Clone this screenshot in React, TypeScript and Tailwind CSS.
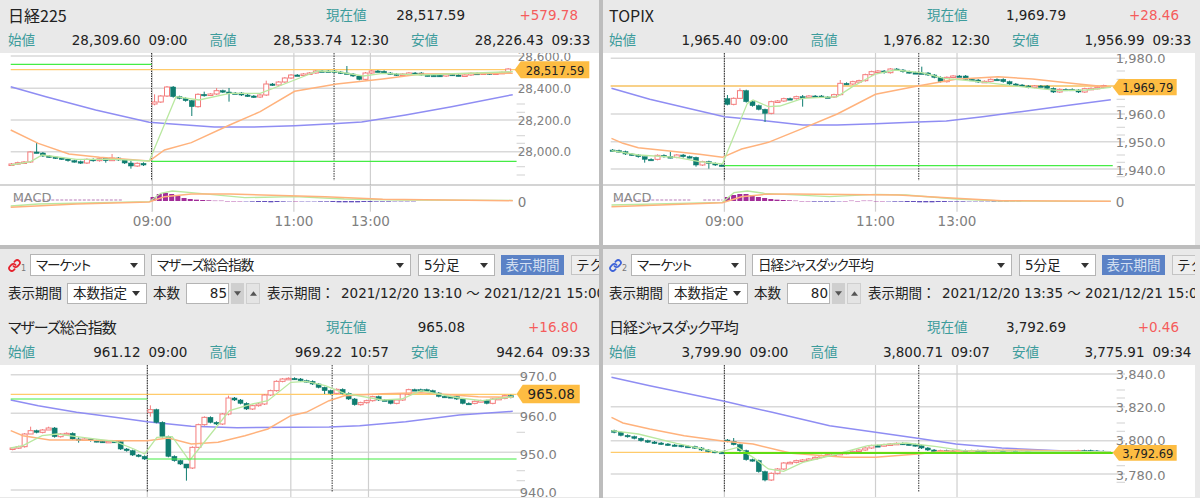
import { Link } from 'lucide-react';

// chart data is in "trace" units: x 1568 = 600px, y 3 = 1px
type Seg = { x0: number; x1: number; open: number; closes: number[]; wicks?: Record<number, [number, number]> };
type ChartData = {
  top: number;
  height: number;
  axisClass: string;
  tagClass: string;
  grid: number[];
  minor: number[];
  labels: [string, number][];
  dashed: number[];
  vert: number[];
  vertEnd: number;
  dashEnd: number;
  gold: number;
  greens: [number, number, number][];
  greenColor: string;
  greenWidth: number;
  blue: number[][];
  orange: number[][];
  lime: number[][];
  segs: Seg[];
  tag: { text: string; x: number; y0: number; y1: number; w: number };
  macd?: { lime: number[][]; orange: number[][]; bars: number[]; faint: number[][]; times: [string, number][]; x0: number; step: number };
};

const TX = 600 / 1568;

const nikkei: ChartData = {
  top: 53,
  height: 192,
  axisClass: 'text-[12px]',
  tagClass: 'text-[11.5px]',
  grid: [168, 265, 360, 455],
  minor: [215, 312, 337, 407, 430, 500, 525],
  labels: [['28,600.0', 172], ['28,400.0', 267], ['28,200.0', 364], ['28,000.0', 457]],
  dashed: [396, 873],
  vert: [398, 768, 968],
  vertEnd: 635,
  dashEnd: 542,
  gold: 209,
  greens: [[28, 396, 193], [396, 1350, 484]],
  greenColor: '#45ec45',
  greenWidth: 1.2,
  blue: [[28, 260], [120, 290], [250, 330], [390, 367], [450, 372], [560, 381], [660, 381], [770, 377], [870, 371], [945, 366], [1060, 345], [1180, 320], [1340, 284]],
  orange: [[28, 390], [100, 430], [180, 462], [260, 472], [390, 483], [430, 450], [500, 428], [600, 375], [680, 335], [770, 274], [880, 252], [1000, 237], [1100, 222], [1340, 220]],
  lime: [[28, 495], [80, 485], [110, 465], [200, 478], [300, 478], [390, 483], [460, 290], [520, 300], [600, 280], [680, 280], [770, 240], [830, 213], [880, 215], [950, 228], [1000, 220], [1100, 225], [1340, 215]],
  segs: [
    { x0: 30, x1: 375, open: 495, closes: [492, 488, 486, 456, 459, 468, 471, 474, 477, 482, 485, 489, 478, 482, 476, 482, 474, 480, 489, 498, 490, 495], wicks: { 4: [428, 460], 15: [478, 488], 16: [462, 482], 19: [482, 506] } },
    { x0: 404, x1: 1328, open: 312, closes: [306, 288, 261, 290, 295, 302, 320, 283, 285, 282, 272, 276, 279, 279, 285, 288, 291, 285, 252, 255, 246, 234, 225, 225, 222, 219, 213, 213, 213, 216, 219, 222, 228, 238, 219, 213, 214, 219, 222, 225, 222, 219, 219, 225, 226, 226, 228, 223, 225, 226, 225, 220, 220, 219, 222, 219, 217, 207], wicks: { 0: [283, 316], 6: [300, 348], 8: [275, 290], 10: [264, 285], 12: [264, 305], 18: [242, 288], 31: [198, 220] } },
  ],
  tag: { text: '28,517.59', x: 1345, y0: 184, y1: 235, w: 195 },
  macd: {
    lime: [[28, 618], [100, 612], [390, 605], [420, 580], [450, 573], [500, 578], [640, 593], [770, 590], [900, 597], [1050, 600], [1340, 601]],
    orange: [[28, 622], [200, 612], [390, 606], [430, 590], [500, 582], [600, 582], [850, 590], [1000, 598], [1340, 602]],
    bars: [12, 21, 24, 21, 15, 9, 6, 4, 3, 2, 1, 1, 0, 0, 0, -1, -2, -3, -3, -4, -3, -2, -1, 0, -1, -1, -1, -2, -2, -3, -4, -4, -4, -4, -3, -3, -2, -2, -2, -1, -1, -1, -1],
    faint: [[40, 600, 320]],
    times: [['09:00', 398], ['11:00', 768], ['13:00', 968]],
    x0: 400,
    step: 16.2,
  },
};

const topix: ChartData = {
  top: 53,
  height: 192,
  axisClass: 'text-[13px]',
  tagClass: 'text-[11.5px]',
  grid: [175, 258, 342, 425, 507],
  minor: [213, 238, 298, 320, 382, 405, 465, 487, 530],
  labels: [['1,980.0', 178], ['1,960.0', 345], ['1,950.0', 428], ['1,940.0', 512]],
  dashed: [325, 833],
  vert: [325, 720, 933],
  vertEnd: 635,
  dashEnd: 542,
  gold: 258,
  greens: [[325, 1340, 497]],
  greenColor: '#45ec45',
  greenWidth: 1.2,
  blue: [[30, 265], [130, 298], [230, 325], [325, 350], [430, 362], [530, 375], [620, 375], [720, 371], [830, 366], [905, 363], [1000, 350], [1100, 335], [1230, 315], [1335, 299]],
  orange: [[30, 415], [60, 430], [100, 443], [200, 455], [260, 463], [320, 472], [370, 447], [440, 427], [530, 385], [620, 342], [720, 283], [830, 258], [930, 238], [1040, 230], [1130, 237], [1250, 252], [1335, 262]],
  lime: [[30, 452], [100, 465], [200, 472], [260, 485], [320, 492], [385, 310], [400, 300], [440, 320], [470, 318], [530, 295], [620, 290], [660, 260], [720, 222], [770, 210], [840, 218], [900, 235], [990, 245], [1100, 260], [1200, 272], [1270, 270], [1335, 262]],
  segs: [
    { x0: 33, x1: 318, open: 450, closes: [452, 455, 462, 465, 470, 478, 478, 466, 470, 472, 465, 470, 472, 495, 485, 490, 495, 496], wicks: { 5: [470, 488], 9: [455, 475], 13: [470, 500], 15: [482, 506] } },
    { x0: 333, x1: 1316, open: 296, closes: [313, 295, 272, 305, 317, 328, 340, 305, 303, 296, 296, 290, 291, 288, 288, 291, 291, 284, 250, 252, 245, 242, 224, 215, 213, 218, 207, 210, 215, 218, 219, 219, 225, 232, 245, 232, 228, 228, 238, 240, 246, 244, 238, 238, 245, 252, 255, 258, 262, 258, 258, 265, 276, 268, 268, 270, 276, 266, 265, 262, 257], wicks: { 0: [285, 316], 2: [265, 296], 6: [326, 366], 12: [285, 320], 18: [240, 286], 31: [200, 222] } },
  ],
  tag: { text: '1,969.79', x: 1340, y0: 237, y1: 286, w: 167 },
  macd: {
    lime: [[30, 615], [320, 607], [350, 578], [385, 573], [430, 580], [600, 590], [720, 583], [800, 585], [930, 597], [1050, 603], [1335, 604]],
    orange: [[30, 620], [320, 608], [370, 590], [430, 583], [500, 582], [780, 585], [930, 595], [1050, 602], [1335, 604]],
    bars: [12, 18, 21, 21, 18, 12, 9, 6, 4, 3, 2, 1, 0, 0, -2, -2, -2, -2, -1, 0, 1, 0, 1, 1, 0, 0, -1, -2, -2, -3, -3, -4, -4, -4, -3, -3, -2, -2, -2, -1, -1, -1, -1, -2, -2, -2, -1, -1],
    faint: [[40, 600, 240], [270, 600, 320]],
    times: [['09:00', 325], ['11:00', 720], ['13:00', 933]],
    x0: 333,
    step: 16.2,
  },
};

const mothers: ChartData = {
  top: 121,
  height: 132,
  axisClass: 'text-[13px]',
  tagClass: 'text-[13.5px]',
  grid: [392, 508, 625, 738],
  minor: [565, 680, 710],
  labels: [['970.0', 400], ['960.0', 518], ['950.0', 633], ['940.0', 748]],
  dashed: [385, 868],
  vert: [385, 760, 963],
  vertEnd: 760,
  dashEnd: 745,
  gold: 451,
  greens: [[28, 385, 465], [385, 1350, 645]],
  greenColor: '#45ec45',
  greenWidth: 1.2,
  blue: [[28, 468], [100, 485], [200, 505], [300, 520], [385, 533], [500, 547], [620, 551], [760, 550], [860, 549], [940, 545], [1060, 533], [1200, 513], [1340, 502]],
  orange: [[28, 560], [60, 575], [130, 588], [200, 588], [300, 590], [385, 590], [440, 582], [500, 600], [570, 595], [640, 575], [700, 555], [760, 515], [800, 505], [860, 470], [900, 455], [1000, 449], [1100, 446], [1250, 458], [1340, 460]],
  lime: [[28, 612], [60, 605], [110, 575], [150, 570], [200, 578], [300, 592], [350, 615], [378, 630], [410, 580], [450, 578], [495, 650], [530, 600], [600, 500], [660, 480], [700, 470], [760, 415], [800, 412], [850, 425], [900, 448], [1000, 468], [1050, 465], [1100, 440], [1200, 462], [1260, 470], [1340, 458]],
  segs: [
    { x0: 33, x1: 378, open: 616, closes: [612, 608, 570, 560, 565, 558, 552, 578, 570, 568, 585, 588, 585, 590, 592, 593, 592, 593, 615, 620, 633, 637, 645], wicks: { 3: [548, 566], 6: [548, 558], 11: [580, 596] } },
    { x0: 393, x1: 1335, open: 505, closes: [497, 535, 578, 637, 650, 660, 672, 610, 542, 520, 535, 540, 510, 462, 468, 478, 495, 485, 480, 453, 440, 412, 405, 403, 405, 410, 412, 420, 430, 440, 448, 436, 448, 465, 482, 476, 470, 458, 468, 468, 478, 468, 450, 437, 437, 437, 440, 447, 457, 458, 458, 465, 478, 478, 472, 470, 478, 465, 463, 455, 460], wicks: { 0: [484, 518], 6: [660, 710], 13: [455, 514], 29: [428, 450] } },
  ],
  tag: { text: '965.08', x: 1350, y0: 422, y1: 478, w: 165 },
};

const jasdaq: ChartData = {
  top: 121,
  height: 132,
  axisClass: 'text-[13px]',
  tagClass: 'text-[11.5px]',
  grid: [390, 488, 590, 690],
  minor: [438, 462, 537, 562, 640, 665, 715],
  labels: [['3,840.0', 392], ['3,820.0', 492], ['3,800.0', 592], ['3,780.0', 695]],
  dashed: [325, 833],
  vert: [325, 720, 933],
  vertEnd: 760,
  dashEnd: 745,
  gold: 625,
  greens: [[325, 1340, 627]],
  greenColor: '#5fdc14',
  greenWidth: 2,
  blue: [[30, 400], [130, 425], [325, 472], [450, 505], [600, 545], [720, 565], [830, 583], [930, 600], [1050, 612], [1200, 620], [1335, 623]],
  orange: [[30, 520], [60, 537], [130, 555], [220, 575], [325, 592], [400, 600], [500, 628], [640, 640], [720, 640], [830, 630], [900, 622], [1100, 618], [1335, 625]],
  lime: [[30, 560], [100, 570], [200, 598], [310, 625], [360, 610], [400, 640], [440, 675], [480, 682], [530, 655], [620, 630], [700, 605], [800, 597], [880, 608], [950, 620], [1335, 624]],
  segs: [
    { x0: 37, x1: 318, open: 560, closes: [565, 574, 578, 583, 590, 594, 597, 600, 603, 604, 607, 608, 612, 618, 622, 625, 627] },
    { x0: 333, x1: 1315, open: 588, closes: [592, 602, 620, 647, 650, 683, 708, 688, 675, 657, 655, 650, 648, 645, 640, 635, 632, 630, 628, 625, 622, 618, 612, 605, 605, 602, 600, 598, 600, 602, 605, 612, 618, 622, 620, 621, 621, 620, 622, 620, 621, 622, 621, 620, 622, 621, 622, 621, 622, 621, 622, 623, 627, 624, 622, 621, 620, 620, 621, 622, 622], wicks: { 6: [680, 712], 1: [582, 604] } },
  ],
  tag: { text: '3,792.69', x: 1340, y0: 603, y1: 650, w: 167 },
};

const poly = (pts: number[][], top: number) => pts.map(([x, y]) => `${x * TX},${y / 3 - top}`).join(' ');

function Candles({ seg, top }: { seg: Seg; top: number }) {
  const step = (seg.x1 - seg.x0) / (seg.closes.length - 1);
  return (
    <>
      {seg.closes.map((close, i) => {
        const open = i === 0 ? seg.open : seg.closes[i - 1];
        const up = close < open;
        const x = (seg.x0 + i * step) * TX;
        const bodyTop = Math.min(open, close);
        const bodyBottom = Math.max(open, close);
        const wick = seg.wicks?.[i] ?? [bodyTop - 3, bodyBottom + 3];
        const color = up ? '#f47c7c' : '#0f7d70';
        return (
          <g key={i}>
            <line x1={x} x2={x} y1={wick[0] / 3 - top} y2={wick[1] / 3 - top} stroke={color} strokeWidth={1} />
            <rect
              x={x - 2.5}
              y={bodyTop / 3 - top}
              width={5}
              height={Math.max((bodyBottom - bodyTop) / 3, 1.5)}
              fill={up ? '#ffffff' : color}
              stroke={color}
              strokeWidth={up ? 1 : 0.5}
            />
          </g>
        );
      })}
    </>
  );
}

function Chart({ data, right }: { data: ChartData; right?: boolean }) {
  const { top, height, tag, macd } = data;
  const width = right ? 592 : 599;
  const mid = (tag.y0 + tag.y1) / 2;
  const tagPts = [
    [tag.x, mid],
    [tag.x + 16, tag.y0],
    [tag.x + tag.w, tag.y0],
    [tag.x + tag.w, tag.y1],
    [tag.x + 16, tag.y1],
  ];
  return (
    <svg width={width} height={height} viewBox={`${right ? 3 : 0} 0 ${width} ${height}`} className="block bg-white">
      {data.grid.map((y) => (
        <line key={y} x1={28 * TX} x2={1372 * TX} y1={y / 3 - top} y2={y / 3 - top} stroke="#d9d9d9" strokeWidth={1.5} />
      ))}
      {data.minor.map((y) => (
        <line key={y} x1={1350 * TX} x2={1372 * TX} y1={y / 3 - top} y2={y / 3 - top} stroke="#d9d9d9" strokeWidth={1.2} />
      ))}
      {data.vert.map((x) => (
        <line key={x} x1={x * TX} x2={x * TX} y1={0} y2={data.vertEnd / 3 - top} stroke="#cfcfcf" strokeWidth={1.2} />
      ))}
      {data.dashed.map((x) => (
        <line key={x} x1={x * TX} x2={x * TX} y1={0} y2={data.dashEnd / 3 - top} stroke="#333333" strokeWidth={1} strokeDasharray="1.5 1" />
      ))}
      <line x1={28 * TX} x2={1350 * TX} y1={data.gold / 3 - top} y2={data.gold / 3 - top} stroke="#ffcb6b" strokeWidth={1.3} />
      <polyline points={poly(data.blue, top)} fill="none" stroke="#8f8df3" strokeWidth={1.5} />
      {data.segs.map((seg, i) => (
        <Candles key={i} seg={seg} top={top} />
      ))}
      <polyline points={poly(data.orange, top)} fill="none" stroke="#ffb27c" strokeWidth={1.5} />
      <polyline points={poly(data.lime, top)} fill="none" stroke="#b9e8a0" strokeWidth={1.3} />
      {data.greens.map(([a, b, y], i) => (
        <line key={i} x1={a * TX} x2={b * TX} y1={y / 3 - top} y2={y / 3 - top} stroke={data.greenColor} strokeWidth={data.greenWidth} />
      ))}

      {data.labels.map(([text, y]) => (
        <text key={text} x={(data.tag.x + 8) * TX} y={y / 3 - top + 4} className={`fill-[#808080] ${data.axisClass}`}>
          {text}
        </text>
      ))}
      <polygon points={poly(tagPts, top)} fill="#fdbc42" />
      <text x={(tag.x + 16 + (tag.w - 16) / 2) * TX} y={mid / 3 - top + 5} textAnchor="middle" className={`fill-[#222222] ${data.tagClass}`}>
        {tag.text}
      </text>

      {macd && (
        <>
          <rect x={0} y={555 / 3 - top} width={width + 3} height={210} fill="#ffffff" />
          <line x1={0} x2={width + 3} y1={555 / 3 - top} y2={555 / 3 - top} stroke="#a9a9a9" strokeWidth={1.2} />
          {data.vert.map((x) => (
            <line key={x} x1={x * TX} x2={x * TX} y1={555 / 3 - top} y2={635 / 3 - top} stroke="#cfcfcf" strokeWidth={1.2} />
          ))}
          {macd.faint.map(([a, y, b], i) => (
            <line key={i} x1={a * TX} x2={b * TX} y1={y / 3 - top} y2={y / 3 - top} stroke="#b77ab7" strokeWidth={1} strokeDasharray="3 1.5" />
          ))}
          {macd.bars.map((h, i) => {
            const x = (macd.x0 + i * macd.step) * TX;
            const base = 603 / 3 - top;
            return (
              <rect
                key={i}
                x={x - 2.5}
                y={h > 0 ? base - h / 3 : base}
                width={5}
                height={Math.max(Math.abs(h) / 3, 0.4)}
                fill={h >= 0 ? '#a22c98' : '#6450bd'}
              />
            );
          })}
          <text x={33 * TX} y={605 / 3 - top} className="fill-[#8a8a8a] text-[13px]">
            MACD
          </text>
          <polyline points={poly(macd.lime, top)} fill="none" stroke="#b9e8a0" strokeWidth={1.3} />
          <polyline points={poly(macd.orange, top)} fill="none" stroke="#ffb27c" strokeWidth={1.5} />
          <text x={(tag.x + 8) * TX} y={620 / 3 - top} className="fill-[#808080] text-[13.5px]">
            0
          </text>
          {macd.times.map(([t, x]) => (
            <text key={t} x={x * TX} y={226 - top} textAnchor="middle" className="fill-[#808080] text-[13.5px]">
              {t}
            </text>
          ))}
        </>
      )}
    </svg>
  );
}

function Stat({ label, value, time }: { label: string; value: string; time: string }) {
  return (
    <div className="flex w-[201.5px] shrink-0 pr-[22px]">
      <span className="text-[#3d9c9c]">{label}</span>
      <span className="flex-1 text-right text-[#222222]">{value}</span>
      <span className="ml-2 w-[39px] whitespace-nowrap text-[#222222]">{time}</span>
    </div>
  );
}

type Quote = { title: string; tight?: boolean; now: string; change: string; open: string[]; high: string[]; low: string[] };

function QuoteHeader({ q, right }: { q: Quote; right?: boolean }) {
  return (
    <div className={right ? 'pl-[6px]' : 'pl-2'}>
      <div className="flex h-[26px] items-center">
        <div className={`w-[318px] shrink-0 font-['Noto_Sans_CJK_JP',sans-serif] text-[#222222] ${q.tight ? "text-[15px] tracking-[-1px] [font-feature-settings:'palt']" : 'text-base'}`}>
          {q.title}
        </div>
        <div className="w-[60px] shrink-0 text-[#3d9c9c]">現在値</div>
        <div className="w-[79px] shrink-0 text-right text-[#222222]">{q.now}</div>
        <div className="w-[113px] shrink-0 text-right text-[#f55c5c]">{q.change}</div>
      </div>
      <div className="flex h-[25px] items-center">
        <Stat label="始値" value={q.open[0]} time={q.open[1]} />
        <Stat label="高値" value={q.high[0]} time={q.high[1]} />
        <Stat label="安値" value={q.low[0]} time={q.low[1]} />
      </div>
    </div>
  );
}

function Select({ value, className }: { value: string; className: string }) {
  return (
    <div className={`flex shrink-0 items-center justify-between border border-[#b4b4b4] bg-white pl-[5px] pr-[6px] text-[#222222] ${className}`}>
      <span>{value}</span>
      <svg width="8" height="5" viewBox="0 0 8 5">
        <path d="M0 0h8L4 5z" fill="#333333" />
      </svg>
    </div>
  );
}

function Toolbar({ name, count, from, chain, right }: { name: string; count: string; from: string; chain: number; right?: boolean }) {
  return (
    <div className={`pt-[5px] ${right ? 'pl-[6px]' : 'pl-2'}`}>
      <div className="flex h-[22px] items-center whitespace-nowrap">
        <div className="flex w-[22px] shrink-0 items-end">
          <Link size={13} strokeWidth={3.2} className={chain === 1 ? 'text-[#e5222c]' : 'text-[#3d62d8]'} />
          <span className="-mb-[3px] text-[8px] text-[#777777]">{chain}</span>
        </div>
        <Select value="マーケット" className="h-[22px] w-[115px] tracking-[-1px] [font-feature-settings:'palt']" />
        <Select value={name} className="ml-[6px] h-[22px] w-[260px] tracking-[-1px] [font-feature-settings:'palt']" />
        <Select value="5分足" className="ml-[7px] h-[22px] w-[77px]" />
        <div className="ml-[6px] flex h-5 w-[63px] shrink-0 items-center justify-center bg-[#5b82c6] text-[#d5e0f2]">表示期間</div>
        <div className="ml-[7px] flex h-5 min-w-0 flex-1 items-center overflow-hidden border border-r-0 border-[#c4c4c4] bg-[#eeeeee] pl-1 text-[#222222]">テクニカル</div>
      </div>
      <div className="mt-[7px] flex h-[21px] items-center whitespace-nowrap text-[#222222]">
        <div className="w-[59px] shrink-0">表示期間</div>
        <Select value="本数指定" className="h-[21px] w-[80px]" />
        <div className="ml-[6px] w-[33px] shrink-0">本数</div>
        <div className="h-[21px] w-[43px] shrink-0 border border-[#b4b4b4] bg-white pr-[1px] text-right leading-[19px]">{count}</div>
        <div className="ml-[2px] flex h-[21px] w-[13px] shrink-0 items-center justify-center bg-[#cfcfcf]">
          <svg width="7" height="5" viewBox="0 0 8 5"><path d="M0 0h8L4 5z" fill="#555555" /></svg>
        </div>
        <div className="ml-[2px] flex h-[21px] w-[14px] shrink-0 items-center justify-center border border-[#cfcfcf] bg-[#e4e4e4]">
          <svg width="7" height="5" viewBox="0 0 8 5"><path d="M0 5h8L4 0z" fill="#555555" /></svg>
        </div>
        <div className="ml-[7px] w-[74px] shrink-0">表示期間：</div>
        <div className="min-w-0 flex-1 overflow-hidden">{from} ～ 2021/12/21 15:00</div>
      </div>
    </div>
  );
}

const q1: Quote = { title: '日経225', now: '28,517.59', change: '+579.78', open: ['28,309.60', '09:00'], high: ['28,533.74', '12:30'], low: ['28,226.43', '09:33'] };
const q2: Quote = { title: 'TOPIX', now: '1,969.79', change: '+28.46', open: ['1,965.40', '09:00'], high: ['1,976.82', '12:30'], low: ['1,956.99', '09:33'] };
const q3: Quote = { title: 'マザーズ総合指数', tight: true, now: '965.08', change: '+16.80', open: ['961.12', '09:00'], high: ['969.22', '10:57'], low: ['942.64', '09:33'] };
const q4: Quote = { title: '日経ジャスダック平均', tight: true, now: '3,792.69', change: '+0.46', open: ['3,799.90', '09:00'], high: ['3,800.71', '09:07'], low: ['3,775.91', '09:34'] };

export default function App() {
  return (
    <div className="flex h-[498px] w-[1200px] flex-col overflow-hidden bg-[#e9e9e9] font-['DejaVu_Sans','Noto_Sans_CJK_JP',sans-serif] text-[13.5px]">
      <div className="flex h-[245px]">
        <div className="w-[599px] overflow-hidden">
          <div className="pt-[2px]">
            <QuoteHeader q={q1} />
          </div>
          <Chart data={nikkei} />
        </div>
        <div className="w-[4px] bg-[#bdbdbd]" />
        <div className="w-[592px] overflow-hidden">
          <div className="pt-[2px]">
            <QuoteHeader q={q2} right />
          </div>
          <Chart data={topix} right />
        </div>
      </div>
      <div className="h-[4px] bg-[#bdbdbd]" />
      <div className="flex h-[249px]">
        <div className="w-[599px] overflow-hidden">
          <Toolbar name="マザーズ総合指数" count="85" from="2021/12/20 13:10" chain={1} />
          <div className="mt-[10px]">
            <QuoteHeader q={q3} />
          </div>
          <Chart data={mothers} />
        </div>
        <div className="w-[4px] bg-[#bdbdbd]" />
        <div className="w-[592px] overflow-hidden">
          <Toolbar name="日経ジャスダック平均" count="80" from="2021/12/20 13:35" chain={2} right />
          <div className="mt-[10px]">
            <QuoteHeader q={q4} right />
          </div>
          <Chart data={jasdaq} right />
        </div>
      </div>
    </div>
  );
}
